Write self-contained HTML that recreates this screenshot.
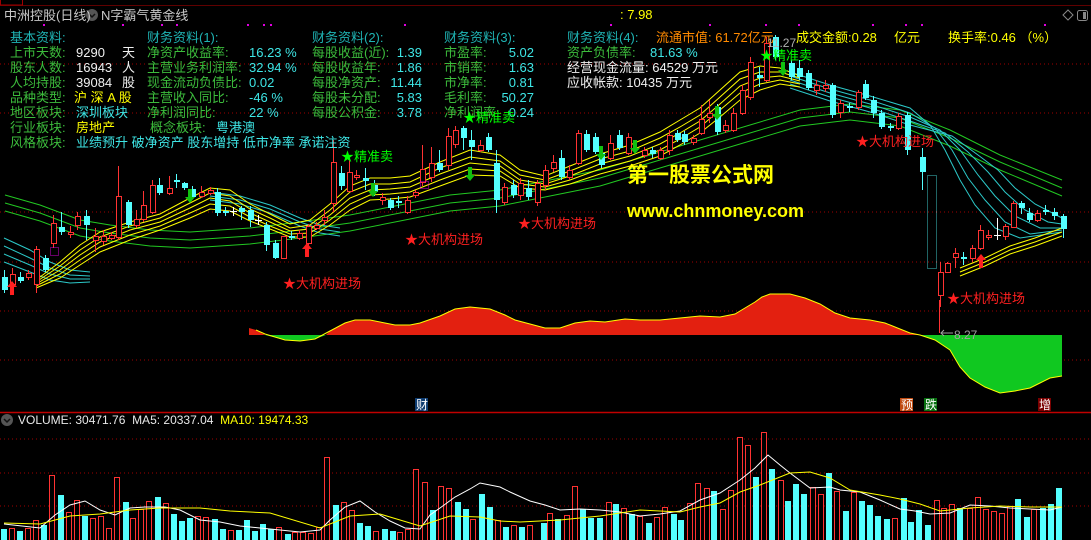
<!DOCTYPE html>
<html><head><meta charset="utf-8"><style>
*{margin:0;padding:0}
body{width:1091px;height:540px;background:#000;overflow:hidden;position:relative;font-family:"Liberation Sans","Noto Sans CJK SC",sans-serif;}
.t{position:absolute;font-size:13px;line-height:15px;white-space:nowrap}
.g{color:#3cbc3c}.h{color:#1fb4b4}.w{color:#f0f0f0}.c{color:#3ee6e6}.y{color:#ffff00}.o{color:#ff8a00}.rd{color:#ff2020}.gr{color:#00ff00}
.ra{text-align:right}
svg{position:absolute;left:0;top:0}
</style></head><body>
<svg width="1091" height="540" viewBox="0 0 1091 540">
<defs><style>
.r{fill:#000;stroke:#ff3232;stroke-width:1}
.cy{fill:#54ffff}
.gl{stroke:#a00000;stroke-width:1;stroke-dasharray:1 3}
</style></defs>
<line x1="0" y1="5.5" x2="1091" y2="5.5" stroke="#600000"/>
<rect x="0.5" y="-1" width="22" height="6" fill="none" stroke="#a00000"/>
<line class="gl" x1="0" y1="64" x2="1091" y2="64"/>
<line class="gl" x1="0" y1="113" x2="1091" y2="113"/>
<line class="gl" x1="0" y1="212" x2="1091" y2="212"/>
<line class="gl" x1="0" y1="262" x2="1091" y2="262"/>
<line class="gl" x1="0" y1="311" x2="1091" y2="311"/>
<line class="gl" x1="0" y1="360" x2="1091" y2="360"/>
<line class="gl" x1="0" y1="439" x2="1091" y2="439"/>
<line class="gl" x1="0" y1="473" x2="1091" y2="473"/>
<line class="gl" x1="0" y1="506" x2="1091" y2="506"/>
<line x1="0" y1="412.5" x2="1091" y2="412.5" stroke="#c00000" stroke-width="1.5"/>

<g fill="none" stroke="#22c822" stroke-width="1">
<polyline points="5,195 40,205 80,220 110,225 150,230 190,232 250,228 300,222 350,215 400,205 450,195 500,190 550,180 600,170 650,155 700,140 750,125 800,110 850,104 900,110 950,130 1000,155 1062,180"/>
<polyline points="5,203 40,213 80,228 110,233 150,238 190,240 250,236 300,230 350,223 400,213 450,203 500,198 550,188 600,178 650,163 700,148 750,133 800,118 850,112 900,118 950,138 1000,162 1062,188"/>
<polyline points="5,211 40,221 80,236 110,241 150,246 190,248 250,244 300,238 350,231 400,221 450,211 500,206 550,196 600,186 650,171 700,156 750,141 800,126 850,120 900,126 950,146 1000,170 1062,196"/>
</g>
<g fill="none" stroke="#2cc8c8" stroke-width="1">
<polyline points="4,238 30,250 50,262 70,270 90,272"/>
<polyline points="4,246 30,258 50,268 70,275 90,276"/>
<polyline points="4,254 30,265 50,274 70,279 90,279"/>
<polyline points="4,262 30,272 50,280 70,283 90,282"/>
<polyline points="210,192 240,196 270,205 300,218 320,225 340,228"/>
<polyline points="210,196 240,200 270,209 300,222 320,229 340,232"/>
<polyline points="210,200 240,204 270,213 300,226 320,233 340,236"/>
<polyline points="790,72 830,85 870,96 910,108 930,125 945,150 960,180 975,205 995,228 1020,238 1062,232"/>
<polyline points="790,76 830,89 870,100 910,113 935,128 952,150 968,178 985,200 1005,222 1030,234 1062,230"/>
<polyline points="790,80 830,93 870,104 910,117 940,130 960,150 978,175 995,196 1015,216 1040,228 1062,228"/>
<polyline points="790,84 830,97 870,108 910,121 945,133 968,152 988,172 1005,192 1025,210 1048,222 1062,224"/>
<polyline points="790,88 830,101 870,112 910,125 952,136 978,155 998,170 1015,188 1035,204 1062,218"/>
</g>
<g fill="none" stroke="#ffff00" stroke-width="1">
<polyline points="36,280 60,262 80,245 100,232 130,222 160,214 190,198 210,188 230,190 250,204 270,214 290,224 310,220 330,204 350,186 370,178 390,178 410,176 440,162 470,150 500,155 520,170 545,176 570,166 600,154 630,145 660,132 680,120 700,108 720,90 740,72 760,66 780,68 800,76"/>
<polyline points="36,282 60,266 80,250 100,237 130,226 160,218 190,203 210,193 230,196 250,209 270,218 290,228 310,225 330,210 350,192 370,184 390,184 410,182 440,168 470,157 500,161 520,175 545,180 570,171 600,159 630,151 660,138 680,127 700,115 720,97 740,79 760,72 780,72 800,78"/>
<polyline points="36,284 60,270 80,255 100,242 130,230 160,222 190,208 210,198 230,201 250,213 270,222 290,231 310,229 330,215 350,198 370,190 390,189 410,187 440,174 470,163 500,166 520,180 545,184 570,176 600,164 630,156 660,144 680,133 700,121 720,104 740,86 760,78 780,76 800,81"/>
<polyline points="36,286 60,274 80,260 100,247 130,235 160,226 190,213 210,204 230,206 250,217 270,226 290,234 310,233 330,220 350,204 370,195 390,194 410,192 440,180 470,169 500,171 520,184 545,187 570,180 600,169 630,161 660,150 680,139 700,127 720,110 740,93 760,84 780,80 800,84"/>
<polyline points="36,288 60,278 80,265 100,252 130,240 160,230 190,218 210,209 230,211 250,221 270,229 290,237 310,237 330,225 350,210 370,200 390,199 410,197 440,186 470,175 500,176 520,188 545,190 570,184 600,174 630,166 660,156 680,145 700,133 720,117 740,100 760,90 780,84 800,87"/>
<polyline points="960,268 985,258 1010,246 1035,238 1062,228"/>
<polyline points="960,272 985,262 1010,250 1035,242 1062,232"/>
<polyline points="960,276 985,266 1010,254 1035,246 1062,236"/>
</g>

<path stroke="#ff3232" stroke-width="1" fill="none" d="M12.5 268V290M28.5 270V280M36.5 246V293M53.5 215V248M70.5 226V238M77.5 212V230M95.5 228V252M103.5 230V245M111.5 232V240M118.5 166V240M136.5 210V228M143.5 191V222M152.5 180V214M169.5 176V195M201.5 186V198M210.5 187V195M283.5 236V259M299.5 230V240M308.5 224V246M316.5 222V230M324.5 210V225M333.5 140V212M349.5 158V192M356.5 170V180M382.5 193V205M407.5 196V214M415.5 190V198M422.5 145V186M431.5 147V182M448.5 128V170M455.5 126V148M480.5 140V152M504.5 183V205M520.5 178V200M537.5 180V206M545.5 165V190M553.5 155V172M569.5 165V180M578.5 130V165M610.5 135V160M628.5 133V155M644.5 147V158M660.5 147V160M669.5 130V155M693.5 135V145M701.5 105V135M709.5 100V123M725.5 120V133M733.5 108V132M742.5 85V115M750.5 57V100M766.5 37V82M816.5 80V95M825.5 80V92M840.5 100V118M858.5 90V110M898.5 113V130M940.5 262V307M947.5 262V273M955.5 248V268M972.5 245V262M980.5 225V250M988.5 230V240M1005.5 224V240M1013.5 201V228M1037.5 210V222"/>
<path stroke="#54ffff" stroke-width="1" fill="none" d="M4.5 270V293M20.5 272V283M45.5 255V272M61.5 212V235M86.5 210V240M128.5 200V228M159.5 178V195M176.5 174V188M184.5 182V190M192.5 186V198M217.5 188V216M225.5 207V216M241.5 206V220M250.5 206V227M266.5 222V251M275.5 240V259M291.5 231V240M341.5 166V190M365.5 168V190M374.5 180V196M390.5 198V210M398.5 196V208M439.5 150V172M463.5 126V150M471.5 130V160M488.5 133V152M496.5 150V213M513.5 180V198M528.5 180V200M561.5 150V180M586.5 130V152M595.5 133V154M601.5 150V168M619.5 130V150M652.5 147V158M677.5 130V142M684.5 131V145M717.5 104V135M759.5 67V87M775.5 35V60M791.5 60V80M799.5 60V80M808.5 70V90M832.5 83V118M849.5 103V112M865.5 80V100M873.5 96V118M881.5 110V129M890.5 123V131M907.5 112V155M922.5 148V190M963.5 252V265M1021.5 201V214M1029.5 208V222M1045.5 205V215M1054.5 208V220M1063.5 214V238"/>
<path stroke="#ffffff" stroke-width="1" fill="none" d="M233.5 207V216M230 211.5H237M258.5 215V225M255 220.5H262M997.5 218V240M994 235.5H1001"/>
<g class="r">
<rect x="10.5" y="274.5" width="5" height="10"/><rect x="26.5" y="273.5" width="5" height="4"/><rect x="34.5" y="249.5" width="5" height="35"/><rect x="51.5" y="223.5" width="5" height="20"/><rect x="68.5" y="232.5" width="5" height="2"/><rect x="75.5" y="216.5" width="5" height="9"/><rect x="93.5" y="236.5" width="5" height="4"/><rect x="101.5" y="236.5" width="5" height="5"/><rect x="109.5" y="235.5" width="5" height="3"/><rect x="116.5" y="196.5" width="5" height="41"/><rect x="134.5" y="219.5" width="5" height="6"/><rect x="141.5" y="205.5" width="5" height="14"/><rect x="150.5" y="185.5" width="5" height="27"/><rect x="167.5" y="188.5" width="5" height="5"/><rect x="199.5" y="192.5" width="5" height="4"/><rect x="208.5" y="190.5" width="5" height="3"/><rect x="281.5" y="236.5" width="5" height="22"/><rect x="297.5" y="233.5" width="5" height="5"/><rect x="306.5" y="226.5" width="5" height="17"/><rect x="314.5" y="225.5" width="5" height="3"/><rect x="322.5" y="217.5" width="5" height="3"/><rect x="331.5" y="162.5" width="5" height="41"/><rect x="347.5" y="172.5" width="5" height="19"/><rect x="354.5" y="175.5" width="5" height="2"/><rect x="380.5" y="197.5" width="5" height="3"/><rect x="405.5" y="200.5" width="5" height="12"/><rect x="413.5" y="192.5" width="5" height="3"/><rect x="420.5" y="169.5" width="5" height="13"/><rect x="429.5" y="163.5" width="5" height="14"/><rect x="446.5" y="136.5" width="5" height="29"/><rect x="453.5" y="130.5" width="5" height="14"/><rect x="478.5" y="145.5" width="5" height="5"/><rect x="502.5" y="187.5" width="5" height="15"/><rect x="518.5" y="183.5" width="5" height="12"/><rect x="535.5" y="183.5" width="5" height="19"/><rect x="543.5" y="170.5" width="5" height="15"/><rect x="551.5" y="162.5" width="5" height="6"/><rect x="567.5" y="170.5" width="5" height="7"/><rect x="576.5" y="133.5" width="5" height="30"/><rect x="608.5" y="143.5" width="5" height="15"/><rect x="626.5" y="137.5" width="5" height="16"/><rect x="642.5" y="150.5" width="5" height="5"/><rect x="658.5" y="150.5" width="5" height="8"/><rect x="667.5" y="135.5" width="5" height="15"/><rect x="691.5" y="138.5" width="5" height="4"/><rect x="699.5" y="119.5" width="5" height="14"/><rect x="707.5" y="113.5" width="5" height="4"/><rect x="723.5" y="125.5" width="5" height="5"/><rect x="731.5" y="113.5" width="5" height="17"/><rect x="740.5" y="90.5" width="5" height="23"/><rect x="748.5" y="62.5" width="5" height="35"/><rect x="764.5" y="43.5" width="5" height="37"/><rect x="814.5" y="85.5" width="5" height="5"/><rect x="823.5" y="85.5" width="5" height="3"/><rect x="838.5" y="103.5" width="5" height="9"/><rect x="856.5" y="92.5" width="5" height="15"/><rect x="896.5" y="116.5" width="5" height="12"/><rect x="938.5" y="272.5" width="5" height="23"/><rect x="945.5" y="263.5" width="5" height="9"/><rect x="953.5" y="253.5" width="5" height="4"/><rect x="970.5" y="248.5" width="5" height="10"/><rect x="978.5" y="230.5" width="5" height="18"/><rect x="986.5" y="235.5" width="5" height="2"/><rect x="1003.5" y="226.5" width="5" height="10"/><rect x="1011.5" y="203.5" width="5" height="24"/><rect x="1035.5" y="213.5" width="5" height="7"/>
</g>
<g class="cy">
<rect x="2" y="277" width="6" height="13"/><rect x="18" y="277" width="6" height="4"/><rect x="43" y="258" width="6" height="12"/><rect x="59" y="227" width="6" height="5"/><rect x="84" y="216" width="6" height="9"/><rect x="126" y="202" width="6" height="23"/><rect x="157" y="185" width="6" height="8"/><rect x="174" y="180" width="6" height="2"/><rect x="182" y="183" width="6" height="5"/><rect x="190" y="189" width="6" height="8"/><rect x="215" y="192" width="6" height="21"/><rect x="223" y="211" width="6" height="2"/><rect x="239" y="208" width="6" height="4"/><rect x="248" y="210" width="6" height="10"/><rect x="264" y="225" width="6" height="20"/><rect x="273" y="243" width="6" height="15"/><rect x="289" y="236" width="6" height="2"/><rect x="339" y="173" width="6" height="13"/><rect x="363" y="178" width="6" height="3"/><rect x="372" y="185" width="6" height="7"/><rect x="388" y="200" width="6" height="8"/><rect x="396" y="201" width="6" height="2"/><rect x="437" y="163" width="6" height="7"/><rect x="461" y="128" width="6" height="10"/><rect x="469" y="140" width="6" height="7"/><rect x="486" y="137" width="6" height="13"/><rect x="494" y="163" width="6" height="37"/><rect x="511" y="185" width="6" height="10"/><rect x="526" y="188" width="6" height="9"/><rect x="559" y="158" width="6" height="19"/><rect x="584" y="134" width="6" height="16"/><rect x="593" y="137" width="6" height="15"/><rect x="599" y="153" width="6" height="12"/><rect x="617" y="135" width="6" height="13"/><rect x="650" y="150" width="6" height="4"/><rect x="675" y="133" width="6" height="7"/><rect x="682" y="134" width="6" height="8"/><rect x="715" y="107" width="6" height="25"/><rect x="757" y="75" width="6" height="3"/><rect x="773" y="37" width="6" height="20"/><rect x="789" y="63" width="6" height="14"/><rect x="797" y="68" width="6" height="9"/><rect x="806" y="73" width="6" height="15"/><rect x="830" y="85" width="6" height="30"/><rect x="847" y="106" width="6" height="2"/><rect x="863" y="84" width="6" height="14"/><rect x="871" y="100" width="6" height="13"/><rect x="879" y="113" width="6" height="14"/><rect x="888" y="126" width="6" height="2"/><rect x="905" y="115" width="6" height="35"/><rect x="920" y="157" width="6" height="15"/><rect x="961" y="257" width="6" height="2"/><rect x="1019" y="203" width="6" height="5"/><rect x="1027" y="213" width="6" height="7"/><rect x="1043" y="210" width="6" height="2"/><rect x="1052" y="212" width="6" height="4"/><rect x="1061" y="216" width="6" height="13"/>
</g>
<rect x="927.5" y="175.5" width="9" height="93" fill="none" stroke="#40c8c8" stroke-dasharray="1 1"/>
<rect x="50.5" y="247.5" width="8" height="8" fill="none" stroke="#d000d0" stroke-dasharray="1 1"/>
<rect x="420.5" y="181.5" width="8" height="7" fill="none" stroke="#d000d0" stroke-dasharray="1 1"/>
<g fill="#ff2020">
<path d="M12 281l-5 6h3v8h4v-8h3z"/><path d="M307 243l-5 6h3v8h4v-8h3z"/><path d="M981 254l-5 6h3v8h4v-8h3z"/>
</g>
<g fill="#10c010">
<path d="M190 203l-5-6h3v-8h4v8h3z"/><path d="M373 197l-5-6h3v-8h4v8h3z"/><path d="M470 181l-5-6h3v-8h4v8h3z"/><path d="M601 160l-5-6h3v-8h4v8h3z"/><path d="M635 154l-5-6h3v-8h4v8h3z"/><path d="M717 120l-5-6h3v-8h4v8h3z"/><path d="M783 76l-5-6h3v-8h4v8h3z"/>
</g>

<path fill="#e32010" d="M249 328L256 330L265 335L326 335L330 331L345 323L355 320L370 320L385 323L395 325L410 325L420 323L440 316L455 309L470 307L490 309L505 315L515 320L530 324L545 328L560 328L575 323L590 321L605 322L625 319L640 320L660 320L680 318L700 316L720 317L735 314L745 308L755 302L762 297L770 294L790 294L805 298L820 304L835 313L850 318L870 320L885 323L900 329L910 333L920 335L249 335Z"/>
<path fill="#10c820" d="M265 335L285 340L300 341L315 339L326 335Z"/>
<path fill="#10c820" d="M920 335L935 340L950 350L960 367L970 378L985 387L1000 393L1015 391L1030 388L1040 383L1050 378L1062 376L1062 335Z"/>
<polyline fill="none" stroke="#ffff00" stroke-width="1" points="256,330 265,334 285,340 300,341 315,339 330,331 345,323 355,320 370,320 385,323 395,325 410,325 420,323 440,316 455,309 470,307 490,309 505,315 515,320 530,324 545,328 560,328 575,323 590,321 605,322 625,319 640,320 660,320 680,318 700,316 720,317 735,314 745,308 755,302 762,297 770,294 790,294 805,298 820,304 835,313 850,318 870,320 885,323 900,329 910,333 920,335 935,340 950,350 960,367 970,378 985,387 1000,393 1015,391 1030,388 1040,383 1050,378 1062,376"/>
<line x1="939.5" y1="300" x2="939.5" y2="333" stroke="#ff3232"/>
<path d="M941 333h12M944 330l-3 3 3 3" stroke="#a0a0a0" fill="none"/>
<text x="954" y="339" font-size="12" fill="#a0a0a0" font-family="Liberation Sans">8.27</text>

<rect x="415" y="398" width="13" height="13" fill="#0e3c70"/><text x="416" y="409" font-size="12" fill="#fff" font-family="Noto Sans CJK SC">财</text>
<rect x="900" y="398" width="13" height="13" fill="#c04a10"/><text x="901" y="409" font-size="12" fill="#fff" font-family="Noto Sans CJK SC">预</text>
<rect x="924" y="398" width="13" height="13" fill="#087010"/><text x="925" y="409" font-size="12" fill="#fff" font-family="Noto Sans CJK SC">跌</text>
<rect x="1038" y="398" width="13" height="13" fill="#7a0000"/><text x="1039" y="409" font-size="12" fill="#fff" font-family="Noto Sans CJK SC">增</text>

<g class="cy">
<rect x="1" y="529" width="6" height="11"/><rect x="17" y="531" width="6" height="9"/><rect x="41" y="525" width="6" height="15"/><rect x="58" y="495" width="6" height="45"/><rect x="82" y="516" width="6" height="24"/><rect x="123" y="502" width="6" height="38"/><rect x="155" y="497" width="6" height="43"/><rect x="171" y="514" width="6" height="26"/><rect x="179" y="521" width="6" height="19"/><rect x="187" y="518" width="6" height="22"/><rect x="212" y="519" width="6" height="21"/><rect x="220" y="529" width="6" height="11"/><rect x="236" y="530" width="6" height="10"/><rect x="244" y="520" width="6" height="20"/><rect x="252" y="531" width="6" height="9"/><rect x="260" y="524" width="6" height="16"/><rect x="268" y="529" width="6" height="11"/><rect x="285" y="534" width="6" height="6"/><rect x="333" y="505" width="6" height="35"/><rect x="357" y="523" width="6" height="17"/><rect x="365" y="526" width="6" height="14"/><rect x="382" y="529" width="6" height="11"/><rect x="390" y="531" width="6" height="9"/><rect x="430" y="510" width="6" height="30"/><rect x="455" y="502" width="6" height="38"/><rect x="463" y="509" width="6" height="31"/><rect x="479" y="494" width="6" height="46"/><rect x="487" y="507" width="6" height="33"/><rect x="503" y="527" width="6" height="13"/><rect x="519" y="527" width="6" height="13"/><rect x="541" y="523" width="6" height="17"/>
<rect x="555" y="519" width="6" height="21"/><rect x="580" y="509" width="6" height="31"/><rect x="588" y="518" width="6" height="22"/><rect x="597" y="518" width="6" height="22"/><rect x="613" y="504" width="6" height="36"/><rect x="629" y="514" width="6" height="26"/><rect x="646" y="523" width="6" height="17"/><rect x="671" y="514" width="6" height="26"/><rect x="678" y="520" width="6" height="20"/><rect x="711" y="491" width="6" height="49"/><rect x="753" y="477" width="6" height="63"/><rect x="769" y="469" width="6" height="71"/><rect x="785" y="501" width="6" height="39"/><rect x="793" y="484" width="6" height="56"/><rect x="801" y="494" width="6" height="46"/><rect x="826" y="473" width="6" height="67"/><rect x="843" y="511" width="6" height="29"/><rect x="859" y="501" width="6" height="39"/><rect x="867" y="505" width="6" height="35"/><rect x="875" y="516" width="6" height="24"/><rect x="884" y="519" width="6" height="21"/><rect x="901" y="498" width="6" height="42"/><rect x="908" y="522" width="6" height="18"/><rect x="916" y="510" width="6" height="30"/><rect x="925" y="525" width="6" height="15"/><rect x="957" y="508" width="6" height="32"/><rect x="1015" y="499" width="6" height="41"/><rect x="1024" y="517" width="6" height="23"/><rect x="1040" y="508" width="6" height="32"/><rect x="1048" y="504" width="6" height="36"/><rect x="1056" y="488" width="6" height="52"/>
</g>
<g class="r">
<rect x="9.5" y="528.5" width="5" height="12"/><rect x="25.5" y="528.5" width="5" height="12"/><rect x="33.5" y="520.5" width="5" height="20"/><rect x="49.5" y="475.5" width="5" height="65"/><rect x="66.5" y="512.5" width="5" height="28"/><rect x="74.5" y="500.5" width="5" height="40"/><rect x="90.5" y="518.5" width="5" height="22"/><rect x="98.5" y="516.5" width="5" height="24"/><rect x="106.5" y="528.5" width="5" height="12"/><rect x="114.5" y="477.5" width="5" height="63"/><rect x="130.5" y="518.5" width="5" height="22"/><rect x="138.5" y="509.5" width="5" height="31"/><rect x="146.5" y="501.5" width="5" height="39"/><rect x="163.5" y="503.5" width="5" height="37"/><rect x="195.5" y="516.5" width="5" height="24"/><rect x="203.5" y="517.5" width="5" height="23"/><rect x="228.5" y="530.5" width="5" height="10"/><rect x="276.5" y="527.5" width="5" height="13"/><rect x="292.5" y="532.5" width="5" height="8"/><rect x="300.5" y="532.5" width="5" height="8"/><rect x="308.5" y="533.5" width="5" height="7"/><rect x="316.5" y="527.5" width="5" height="13"/><rect x="324.5" y="457.5" width="5" height="83"/><rect x="341.5" y="502.5" width="5" height="38"/><rect x="349.5" y="510.5" width="5" height="30"/><rect x="373.5" y="531.5" width="5" height="9"/><rect x="397.5" y="532.5" width="5" height="8"/><rect x="405.5" y="529.5" width="5" height="11"/><rect x="413.5" y="469.5" width="5" height="71"/><rect x="422.5" y="482.5" width="5" height="58"/><rect x="438.5" y="486.5" width="5" height="54"/><rect x="446.5" y="488.5" width="5" height="52"/><rect x="470.5" y="519.5" width="5" height="21"/><rect x="495.5" y="520.5" width="5" height="20"/><rect x="511.5" y="525.5" width="5" height="15"/><rect x="527.5" y="525.5" width="5" height="15"/>
<rect x="547.5" y="513.5" width="5" height="27"/><rect x="564.5" y="515.5" width="5" height="25"/><rect x="572.5" y="486.5" width="5" height="54"/><rect x="606.5" y="502.5" width="5" height="38"/><rect x="621.5" y="508.5" width="5" height="32"/><rect x="637.5" y="516.5" width="5" height="24"/><rect x="654.5" y="517.5" width="5" height="23"/><rect x="662.5" y="507.5" width="5" height="33"/><rect x="687.5" y="503.5" width="5" height="37"/><rect x="695.5" y="483.5" width="5" height="57"/><rect x="704.5" y="488.5" width="5" height="52"/><rect x="720.5" y="509.5" width="5" height="31"/><rect x="728.5" y="490.5" width="5" height="50"/><rect x="737.5" y="437.5" width="5" height="103"/><rect x="745.5" y="445.5" width="5" height="95"/><rect x="761.5" y="432.5" width="5" height="108"/><rect x="778.5" y="480.5" width="5" height="60"/><rect x="810.5" y="487.5" width="5" height="53"/><rect x="818.5" y="494.5" width="5" height="46"/><rect x="834.5" y="491.5" width="5" height="49"/><rect x="851.5" y="492.5" width="5" height="48"/><rect x="892.5" y="518.5" width="5" height="22"/><rect x="934.5" y="500.5" width="5" height="40"/><rect x="941.5" y="508.5" width="5" height="32"/><rect x="949.5" y="504.5" width="5" height="36"/><rect x="967.5" y="508.5" width="5" height="32"/><rect x="975.5" y="497.5" width="5" height="43"/><rect x="983.5" y="509.5" width="5" height="31"/><rect x="991.5" y="511.5" width="5" height="29"/><rect x="999.5" y="513.5" width="5" height="27"/><rect x="1007.5" y="506.5" width="5" height="34"/><rect x="1031.5" y="509.5" width="5" height="31"/>
</g>
<polyline fill="none" stroke="#ffffff" stroke-width="1" points="4,524 40,528 55,515 70,505 85,501 100,510 115,515 130,508 145,507 165,507 180,510 200,520 220,522 240,526 260,528 280,530 300,532 320,530 330,520 345,507 360,501 375,512 390,521 405,528 420,529 430,515 440,508 455,497 470,489 480,483 500,487 510,492 530,501 545,505 560,510 580,509 600,510 620,512 640,516 660,514 680,511 700,500 720,493 740,480 755,468 768,455 780,465 790,473 810,488 830,487 840,490 860,492 880,500 900,509 915,511 930,514 950,513 970,505 990,506 1010,508 1030,509 1050,510 1062,507"/>
<polyline fill="none" stroke="#ffff00" stroke-width="1" points="4,523 40,524 70,516 100,514 130,510 160,508 200,508 230,511 270,513 320,528 350,516 380,514 420,526 450,516 480,517 500,521 520,522 560,520 600,516 640,510 680,512 700,507 720,503 740,492 760,485 790,473 810,472 830,478 850,490 880,495 900,499 920,504 940,511 970,508 1000,506 1030,507 1062,507"/>

<circle cx="92" cy="15" r="6" fill="#555"/><path d="M89 14l3 3 3-3" stroke="#111" fill="none" stroke-width="1.5"/>
<circle cx="7" cy="420" r="6" fill="#555"/><path d="M4 419l3 3 3-3" stroke="#111" fill="none" stroke-width="1.5"/>
<path d="M1063 15l5-5 5 5-5 5z" fill="none" stroke="#888"/>
<rect x="1077.5" y="10.5" width="10" height="10" rx="2" fill="none" stroke="#888"/><rect x="1083" y="12" width="3" height="7" fill="#888"/>
<g fill="#e000e0">
<rect x="43" y="24" width="2" height="2"/><rect x="122" y="24" width="2" height="2"/><rect x="161" y="24" width="2" height="2"/><rect x="176" y="24" width="2" height="2"/><rect x="247" y="24" width="2" height="2"/><rect x="263" y="24" width="2" height="2"/><rect x="270" y="24" width="2" height="2"/><rect x="404" y="24" width="2" height="2"/><rect x="610" y="24" width="2" height="2"/><rect x="709" y="24" width="2" height="2"/><rect x="765" y="24" width="2" height="2"/><rect x="798" y="24" width="2" height="2"/><rect x="872" y="24" width="2" height="2"/><rect x="905" y="24" width="2" height="2"/><rect x="921" y="24" width="2" height="2"/><rect x="1044" y="24" width="2" height="2"/>
</g>
</svg>

<div class="t" style="left:4px;top:8px;color:#c8c8c8;font-size:13px;line-height:15px">中洲控股(日线)</div>
<div class="t" style="left:101px;top:8px;color:#c8c8c8;font-size:13px;line-height:15px">N字霸气黄金线</div>
<div class="t y" style="left:620px;top:7px">: 7.98</div>

<div class="t h" style="left:10px;top:30px">基本资料:</div>
<div class="t g" style="left:10px;top:45px">上市天数:</div><div class="t w" style="left:76px;top:45px">9290</div><div class="t w" style="left:122px;top:45px">天</div>
<div class="t g" style="left:10px;top:60px">股东人数:</div><div class="t w" style="left:76px;top:60px">16943</div><div class="t w" style="left:122px;top:60px">人</div>
<div class="t g" style="left:10px;top:75px">人均持股:</div><div class="t w" style="left:76px;top:75px">39084</div><div class="t w" style="left:122px;top:75px">股</div>
<div class="t g" style="left:10px;top:90px">品种类型:</div><div class="t y" style="left:74px;top:90px">沪 深 A 股</div>
<div class="t g" style="left:10px;top:105px">地区板块:</div><div class="t c" style="left:76px;top:105px">深圳板块</div>
<div class="t g" style="left:10px;top:120px">行业板块:</div><div class="t y" style="left:76px;top:120px">房地产</div>
<div class="t g" style="left:10px;top:135px">风格板块:</div><div class="t c" style="left:76px;top:135px">业绩预升 破净资产 股东增持 低市净率 承诺注资</div>

<div class="t h" style="left:147px;top:30px">财务资料(1):</div>
<div class="t g" style="left:147px;top:45px">净资产收益率:</div><div class="t c" style="left:249px;top:45px">16.23 %</div>
<div class="t g" style="left:147px;top:60px">主营业务利润率:</div><div class="t c" style="left:249px;top:60px">32.94 %</div>
<div class="t g" style="left:147px;top:75px">现金流动负债比:</div><div class="t c" style="left:249px;top:75px">0.02</div>
<div class="t g" style="left:147px;top:90px">主营收入同比:</div><div class="t c" style="left:249px;top:90px">-46 %</div>
<div class="t g" style="left:147px;top:105px">净利润同比:</div><div class="t c" style="left:249px;top:105px">22 %</div>
<div class="t g" style="left:150px;top:120px">概念板块:</div><div class="t c" style="left:216px;top:120px">粤港澳</div>

<div class="t h" style="left:312px;top:30px">财务资料(2):</div>
<div class="t g" style="left:312px;top:45px">每股收益(近):</div><div class="t c ra" style="left:372px;width:50px;top:45px">1.39</div>
<div class="t g" style="left:312px;top:60px">每股收益年:</div><div class="t c ra" style="left:372px;width:50px;top:60px">1.86</div>
<div class="t g" style="left:312px;top:75px">每股净资产:</div><div class="t c ra" style="left:372px;width:50px;top:75px">11.44</div>
<div class="t g" style="left:312px;top:90px">每股未分配:</div><div class="t c ra" style="left:372px;width:50px;top:90px">5.83</div>
<div class="t g" style="left:312px;top:105px">每股公积金:</div><div class="t c ra" style="left:372px;width:50px;top:105px">3.78</div>

<div class="t h" style="left:444px;top:30px">财务资料(3):</div>
<div class="t g" style="left:444px;top:45px">市盈率:</div><div class="t c ra" style="left:484px;width:50px;top:45px">5.02</div>
<div class="t g" style="left:444px;top:60px">市销率:</div><div class="t c ra" style="left:484px;width:50px;top:60px">1.63</div>
<div class="t g" style="left:444px;top:75px">市净率:</div><div class="t c ra" style="left:484px;width:50px;top:75px">0.81</div>
<div class="t g" style="left:444px;top:90px">毛利率:</div><div class="t c ra" style="left:484px;width:50px;top:90px">50.27</div>
<div class="t g" style="left:444px;top:105px">净利润率:</div><div class="t c ra" style="left:484px;width:50px;top:105px">0.24</div>

<div class="t h" style="left:567px;top:30px">财务资料(4):</div>
<div class="t o" style="left:656px;top:30px">流通市值: 61.72亿元</div>
<div class="t y" style="left:796px;top:30px">成交金额:0.28</div>
<div class="t y" style="left:894px;top:30px">亿元</div>
<div class="t y" style="left:948px;top:30px">换手率:0.46 （%）</div>
<div class="t" style="left:767px;top:36px;color:#b0b0b0;font-size:12px">11.27</div>
<div class="t g" style="left:567px;top:45px">资产负债率:</div><div class="t c" style="left:650px;top:45px">81.63 %</div>
<div class="t w" style="left:567px;top:60px">经营现金流量: 64529 万元</div>
<div class="t w" style="left:567px;top:75px">应收帐款: 10435 万元</div>

<div class="t gr" style="left:341px;top:149px">★精准卖</div>
<div class="t gr" style="left:463px;top:110px">★精准卖</div>
<div class="t gr" style="left:760px;top:48px">★精准卖</div>
<div class="t rd" style="left:283px;top:276px">★大机构进场</div>
<div class="t rd" style="left:405px;top:232px">★大机构进场</div>
<div class="t rd" style="left:518px;top:216px">★大机构进场</div>
<div class="t rd" style="left:856px;top:134px">★大机构进场</div>
<div class="t rd" style="left:947px;top:291px">★大机构进场</div>

<div class="t y" style="left:627px;top:163px;font-size:21px;line-height:26px;font-weight:bold">第一股票公式网</div>
<div class="t y" style="left:627px;top:199px;font-size:18px;line-height:24px;font-weight:bold">www.chnmoney.com</div>

<div class="t" style="left:18px;top:413px;font-size:12px;color:#e8e8e8">VOLUME: 30471.76&nbsp; MA5: 20337.04&nbsp; <span class="y">MA10: 19474.33</span></div>
</body></html>
